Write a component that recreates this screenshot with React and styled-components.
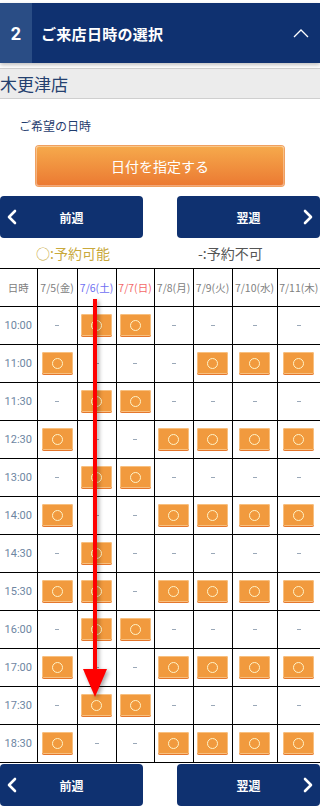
import styled, { createGlobalStyle } from "styled-components";

const GlobalStyle = createGlobalStyle`
	html, body {
		margin: 0;
		padding: 0;
		background: #fff;
		font-family: "Noto Sans CJK JP", "Noto Sans", sans-serif;
	}
	* { box-sizing: border-box; }
`;

const Page = styled.div`
	position: relative;
	width: 320px;
	padding-top: 3px;
`;

const StepHeader = styled.div`
	display: flex;
	align-items: center;
	height: 60px;
	background: #0f3170;
	color: #fff;
	box-shadow: 0 2px 4px rgb(0 0 0 / 25%);
	position: relative;
	z-index: 1;
`;

const StepNum = styled.div`
	width: 32px;
	height: 100%;
	background: #2a4d85;
	display: flex;
	align-items: center;
	justify-content: center;
	font-family: "Roboto", "Liberation Sans", sans-serif;
	font-weight: 700;
	font-size: 18px;
`;

const StepTitle = styled.div`
	flex: 1;
	padding-left: 9px;
	font-weight: 700;
	font-size: 15px;
	letter-spacing: 0.3px;
`;

const Caret = styled.div`
	width: 30px;
	display: flex;
	align-items: center;
	justify-content: center;
	margin-right: 4px;
`;

const StoreBar = styled.div`
	margin-top: 5px;
	height: 31px;
	background: #ececec;
	border-top: 1px solid #cfcfcf;
	border-bottom: 1px solid #cfcfcf;
	color: #24406f;
	font-size: 17px;
	line-height: 29px;
`;

const Label = styled.div`
	margin: 19px 0 0 19px;
	font-size: 12px;
	color: #1f3c6e;
	line-height: 16px;
`;

const DateButton = styled.div`
	margin: 12px auto 0;
	width: 248px;
	height: 40px;
	border-radius: 3px;
	background: linear-gradient(#f6aa4c, #eb7932);
	box-shadow: inset 0 0 0 1px rgb(255 255 255 / 35%), 0 0 0 1px #f0a060;
	color: #fff;
	font-size: 14px;
	display: flex;
	align-items: center;
	justify-content: center;
`;

const WeekNav = styled.div`
	display: flex;
	justify-content: space-between;
	margin-top: ${({ top }) => top}px;
`;

const WeekButton = styled.div`
	position: relative;
	width: 143px;
	height: 42px;
	border-radius: 4px;
	background: #0f3170;
	color: #fff;
	font-size: 12px;
	font-weight: 700;
	display: flex;
	align-items: center;
	justify-content: center;
	& > svg {
		position: absolute;
		top: 13px;
		${({ side }) => (side === "left" ? "left: 6px;" : "right: 6px;")}
	}
`;

const Legend = styled.div`
	display: flex;
	height: 30px;
	align-items: center;
	font-size: 14px;
`;

const LegendItem = styled.div`
	color: ${({ color }) => color};
	margin-left: ${({ left }) => left}px;
`;

const Table = styled.table`
	width: 320px;
	border-collapse: collapse;
	table-layout: fixed;
	border-top: 1px solid #000;
`;

const Th = styled.th`
	height: 38px;
	padding: 0;
	font-weight: 400;
	font-size: 10.5px;
	white-space: nowrap;
	color: ${({ color }) => color || "#808080"};
	border-right: 1px solid #000;
	border-bottom: 1px solid #000;
	&:last-child { border-right: none; }
`;

const Td = styled.td`
	height: 38px;
	padding: 0;
	text-align: center;
	vertical-align: middle;
	border-right: 1px solid #000;
	border-bottom: 1px solid #000;
	&:last-child { border-right: none; }
`;

const TimeCell = styled(Td)`
	font-family: "Roboto", "Liberation Sans", sans-serif;
	font-size: 11px;
	color: #6e86a2;
`;

const Dash = styled.div`
	margin: 0 auto;
	width: 4px;
	height: 1px;
	background: #9aa8b8;
`;

const Slot = styled.div`
	margin: 0 auto;
	width: 31px;
	height: 23px;
	border-radius: 2px;
	background: #f19a3e;
	box-shadow: inset 0 0 0 1px #f8c080;
	border-bottom: 1px solid #e5772c;
	display: flex;
	align-items: center;
	justify-content: center;
`;

const Ring = styled.span`
	width: 11px;
	height: 11px;
	border-radius: 50%;
	border: 1.3px solid #fff4c8;
`;

const Arrow = styled.div`
	position: absolute;
	left: 83px;
	top: 299px;
	pointer-events: none;
	filter: drop-shadow(2px 2px 2px rgb(0 0 0 / 35%));
`;

const columns = [
	{ label: "7/5(金)", w: 40 },
	{ label: "7/6(土)", w: 39, color: "#6f6ff2" },
	{ label: "7/7(日)", w: 38, color: "#f46a6a" },
	{ label: "7/8(月)", w: 39 },
	{ label: "7/9(火)", w: 39 },
	{ label: "7/10(水)", w: 45 },
	{ label: "7/11(木)", w: 43 },
];

const rows = [
	["10:00", "0110000"],
	["11:00", "1000111"],
	["11:30", "0110000"],
	["12:30", "1001111"],
	["13:00", "0110000"],
	["14:00", "1001111"],
	["14:30", "0100000"],
	["15:30", "1101111"],
	["16:00", "0110000"],
	["17:00", "1001111"],
	["17:30", "0110000"],
	["18:30", "1001111"],
];

const Chevron = ({ dir }) => (
	<svg width="12" height="16" viewBox="0 0 12 16">
		<path
			d={dir === "left" ? "M9 2 L3 8 L9 14" : "M3 2 L9 8 L3 14"}
			fill="none"
			stroke="#fff"
			strokeWidth="2.6"
			strokeLinecap="round"
			strokeLinejoin="round"
		/>
	</svg>
);

const Weeks = ({ top }) => (
	<WeekNav top={top}>
		<WeekButton side="left">
			<Chevron dir="left" />
			前週
		</WeekButton>
		<WeekButton side="right">
			翌週
			<Chevron dir="right" />
		</WeekButton>
	</WeekNav>
);

export default function App() {
	return (
		<Page>
			<GlobalStyle />
			<StepHeader>
				<StepNum>2</StepNum>
				<StepTitle>ご来店日時の選択</StepTitle>
				<Caret>
					<svg width="16" height="10" viewBox="0 0 16 10">
						<path d="M1 9 L8 2 L15 9" fill="none" stroke="#fff" strokeWidth="1.3" />
					</svg>
				</Caret>
			</StepHeader>
			<StoreBar>木更津店</StoreBar>
			<Label>ご希望の日時</Label>
			<DateButton>日付を指定する</DateButton>
			<Weeks top={10} />
			<Legend>
				<LegendItem color="#c9a93c" left={36}>○:予約可能</LegendItem>
				<LegendItem color="#555" left={88}>-:予約不可</LegendItem>
			</Legend>
			<Table>
				<colgroup>
					<col style={{ width: 37 }} />
					{columns.map((c) => (
						<col key={c.label} style={{ width: c.w }} />
					))}
				</colgroup>
				<thead>
					<tr>
						<Th>日時</Th>
						{columns.map((c) => (
							<Th key={c.label} color={c.color}>
								{c.label}
							</Th>
						))}
					</tr>
				</thead>
				<tbody>
					{rows.map(([time, marks]) => (
						<tr key={time}>
							<TimeCell>{time}</TimeCell>
							{marks.split("").map((m, i) => (
								<Td key={i}>
									{m === "1" ? (
										<Slot>
											<Ring />
										</Slot>
									) : (
										<Dash />
									)}
								</Td>
							))}
						</tr>
					))}
				</tbody>
			</Table>
			<Weeks top={1} />
			<Arrow>
				<svg width="24" height="400" viewBox="0 0 24 400">
					<rect x="10" y="0" width="4" height="373" fill="#ff0000" />
					<path d="M0 370 L24 370 L12 398 Z" fill="#ff0000" />
				</svg>
			</Arrow>
		</Page>
	);
}
